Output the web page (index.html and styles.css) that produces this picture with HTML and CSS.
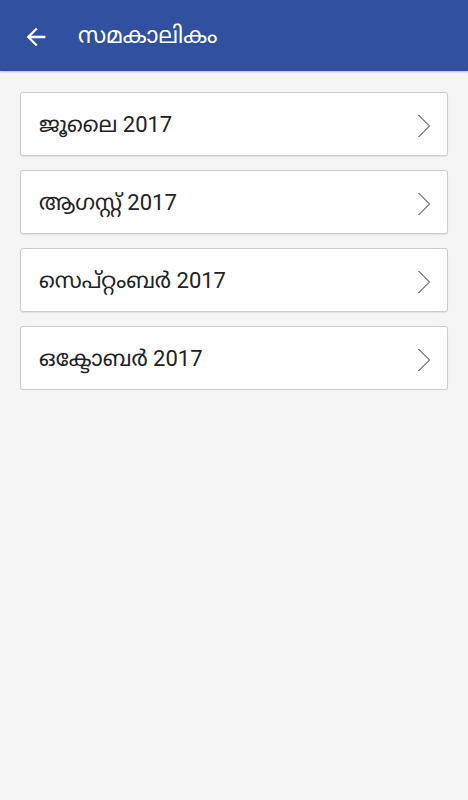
FILE: index.html
```html
<!DOCTYPE html>
<html lang="ml">
<head>
    <meta charset="UTF-8">
    <meta name="viewport" content="width=device-width, initial-scale=1.0">
    <title>സമകാലികം</title>
    <link rel="stylesheet" href="styles.css">
</head>
<body>
    <header class="toolbar">
        <span class="back">
            <svg width="28" height="28" viewBox="0 0 24 24"><path d="M20 11H7.83l5.59-5.59L12 4l-8 8 8 8 1.41-1.41L7.83 13H20v-2z" fill="#fff"/></svg>
        </span>
        <h1>സമകാലികം</h1>
    </header>

    <ul class="month-list">
        <li class="month">
            <span>ജൂലൈ 2017</span>
            <svg class="chev" width="14" height="24" viewBox="0 0 14 24"><path d="M1.5 1L12.5 12L1.5 23" fill="none" stroke="#222" stroke-width="1"/></svg>
        </li>
        <li class="month">
            <span>ആഗസ്റ്റ് 2017</span>
            <svg class="chev" width="14" height="24" viewBox="0 0 14 24"><path d="M1.5 1L12.5 12L1.5 23" fill="none" stroke="#222" stroke-width="1"/></svg>
        </li>
        <li class="month">
            <span>സെപ്റ്റംബർ 2017</span>
            <svg class="chev" width="14" height="24" viewBox="0 0 14 24"><path d="M1.5 1L12.5 12L1.5 23" fill="none" stroke="#222" stroke-width="1"/></svg>
        </li>
        <li class="month">
            <span>ഒക്ടോബർ 2017</span>
            <svg class="chev" width="14" height="24" viewBox="0 0 14 24"><path d="M1.5 1L12.5 12L1.5 23" fill="none" stroke="#222" stroke-width="1"/></svg>
        </li>
    </ul>
</body>
</html>
```

FILE: styles.css
```css
body {
    font-family: Roboto, "Noto Sans Malayalam", "Noto Sans", sans-serif;
    background: #f5f5f5;
    margin: 0;
    padding: 0;
}

.toolbar {
    height: 71px;
    background: #3150a0;
    display: flex;
    align-items: center;
    padding: 2px 0 0 22px;
    box-sizing: border-box;
    box-shadow: 0 1px 2px rgba(0, 0, 0, 0.25);
}

.back {
    display: flex;
    width: 28px;
    height: 28px;
}

.toolbar h1 {
    margin: 0 0 0 28px;
    color: white;
    font-size: 23px;
    font-weight: normal;
}

.month-list {
    list-style: none;
    margin: 0;
    padding: 21px 20px 0;
    display: flex;
    flex-direction: column;
    gap: 14px;
}

.month {
    height: 64px;
    box-sizing: border-box;
    background: white;
    border: 1px solid #c8ccd8;
    border-radius: 3px;
    box-shadow: 0 1px 1px rgba(0, 0, 0, 0.08);
    display: flex;
    align-items: center;
    justify-content: space-between;
    padding: 3px 16px 0 18px;
    font-size: 22px;
    color: #222;
}

.chev {
    display: block;
}
```
